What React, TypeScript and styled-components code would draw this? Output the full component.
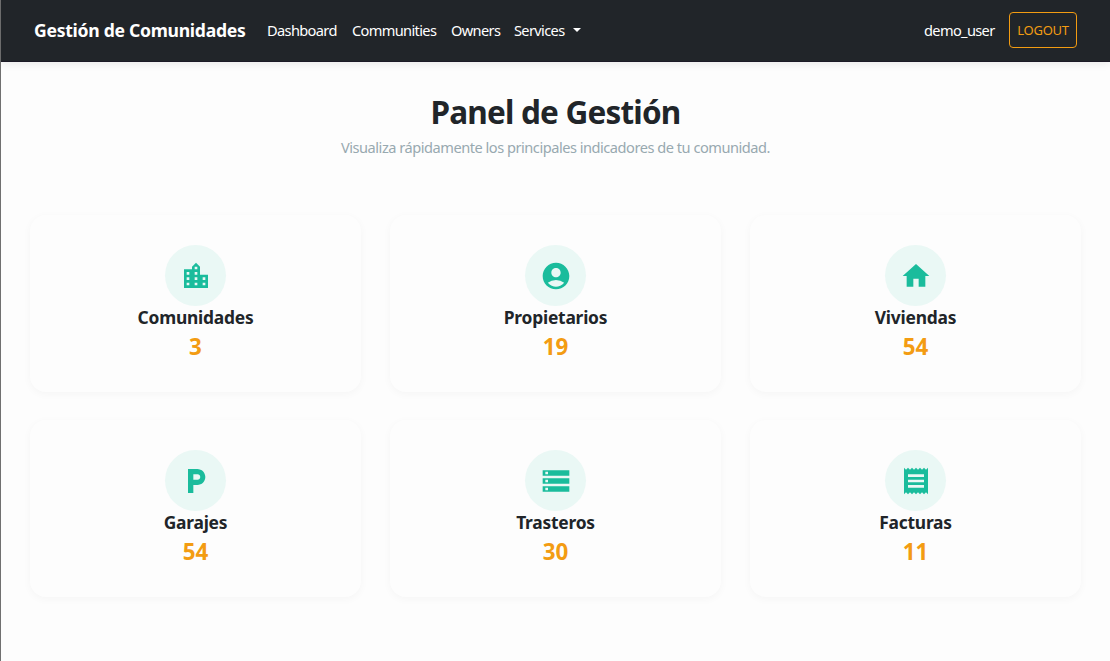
import React from "react";
import styled, { createGlobalStyle } from "styled-components";
import type { IconType } from "react-icons";
import {
  MdAccountCircle,
  MdHome,
  MdLocalParking,
  MdLocationCity,
  MdReceipt,
  MdStorage,
} from "react-icons/md";

const GlobalStyle = createGlobalStyle`
  *, *::before, *::after { box-sizing: border-box; }
  body {
    margin: 0;
    background: #fdfdfd;
    color: #212529;
    font-family: "Segoe UI", "Noto Sans", "Open Sans", sans-serif;
  }
`;

const Page = styled.div`
  min-height: 661px;
  border-left: 1px solid #707070;
`;

const Navbar = styled.nav`
  display: flex;
  align-items: center;
  height: 62px;
  padding: 0 33px 1px;
  background: #212529;
  border-bottom: 1px solid #1c1a26;
  box-shadow: 0 2px 8px rgba(0, 0, 0, 0.08);
  white-space: nowrap;
`;

const Brand = styled.a`
  width: 212px;
  margin-right: 21px;
  color: #fff;
  font-size: 17.6px;
  font-weight: 700;
  letter-spacing: -0.29px;
`;

const NavLink = styled.a<{ $width: number }>`
  display: flex;
  align-items: center;
  width: ${({ $width }) => $width}px;
  margin-right: 14px;
  color: #fff;
  font-size: 14.6px;
  letter-spacing: -0.65px;
`;

const Caret = styled.span`
  margin-left: auto;
  border-top: 4px solid #fff;
  border-left: 4px solid transparent;
  border-right: 4px solid transparent;
`;

const Account = styled.div`
  display: flex;
  align-items: center;
  margin-left: auto;
`;

const LogoutButton = styled.button`
  width: 68px;
  height: 36px;
  padding: 0;
  border: 1px solid #f39c12;
  border-radius: 4px;
  background: transparent;
  color: #f39c12;
  font-family: inherit;
  font-size: 13px;
  letter-spacing: -0.25px;
`;

const Header = styled.header`
  padding-top: 28px;
  text-align: center;
`;

const Title = styled.h1`
  margin: 0;
  font-size: 31.5px;
  line-height: 43px;
  font-weight: 700;
  letter-spacing: -0.8px;
`;

const Subtitle = styled.p`
  margin: 3px 0 0;
  color: #98a9b0;
  font-size: 14.6px;
  line-height: 22px;
  letter-spacing: -0.48px;
`;

const Grid = styled.main`
  display: grid;
  grid-template-columns: repeat(3, 331px);
  grid-auto-rows: 177px;
  gap: 28px 29px;
  padding: 57px 28px 0 29px;
`;

const Card = styled.section`
  display: flex;
  flex-direction: column;
  align-items: center;
  padding-top: 30px;
  border-radius: 16px;
  background: #fdfdfd;
  box-shadow: 0 2px 8px rgba(0, 0, 0, 0.035);
`;

const IconCircle = styled.div`
  display: flex;
  align-items: center;
  justify-content: center;
  width: 61px;
  height: 61px;
  border-radius: 50%;
  background: #eaf8f5;
  color: #1abc9c;
  font-size: 32px;
`;

const CardTitle = styled.h2`
  margin: 0;
  font-size: 17.4px;
  line-height: 23px;
  font-weight: 700;
  letter-spacing: -0.22px;
`;

const CardValue = styled.p`
  margin: 2px 0 0;
  color: #f39c12;
  font-size: 22.4px;
  line-height: 32px;
  font-weight: 700;
`;

const links = [
  { label: "Dashboard", width: 71 },
  { label: "Communities", width: 85 },
  { label: "Owners", width: 49 },
];

const stats: { label: string; value: number; Icon: IconType }[] = [
  { label: "Comunidades", value: 3, Icon: MdLocationCity },
  { label: "Propietarios", value: 19, Icon: MdAccountCircle },
  { label: "Viviendas", value: 54, Icon: MdHome },
  { label: "Garajes", value: 54, Icon: MdLocalParking },
  { label: "Trasteros", value: 30, Icon: MdStorage },
  { label: "Facturas", value: 11, Icon: MdReceipt },
];

export default function App() {
  return (
    <>
      <GlobalStyle />
      <Page>
        <Navbar>
          <Brand>Gestión de Comunidades</Brand>
          {links.map(({ label, width }) => (
            <NavLink key={label} $width={width}>{label}</NavLink>
          ))}
          <NavLink $width={67}>
            Services
            <Caret />
          </NavLink>
          <Account>
            <NavLink $width={71}>demo_user</NavLink>
            <LogoutButton>LOGOUT</LogoutButton>
          </Account>
        </Navbar>
        <Header>
          <Title>Panel de Gestión</Title>
          <Subtitle>Visualiza rápidamente los principales indicadores de tu comunidad.</Subtitle>
        </Header>
        <Grid>
          {stats.map(({ label, value, Icon }) => (
            <Card key={label}>
              <IconCircle>
                <Icon />
              </IconCircle>
              <CardTitle>{label}</CardTitle>
              <CardValue>{value}</CardValue>
            </Card>
          ))}
        </Grid>
      </Page>
    </>
  );
}
